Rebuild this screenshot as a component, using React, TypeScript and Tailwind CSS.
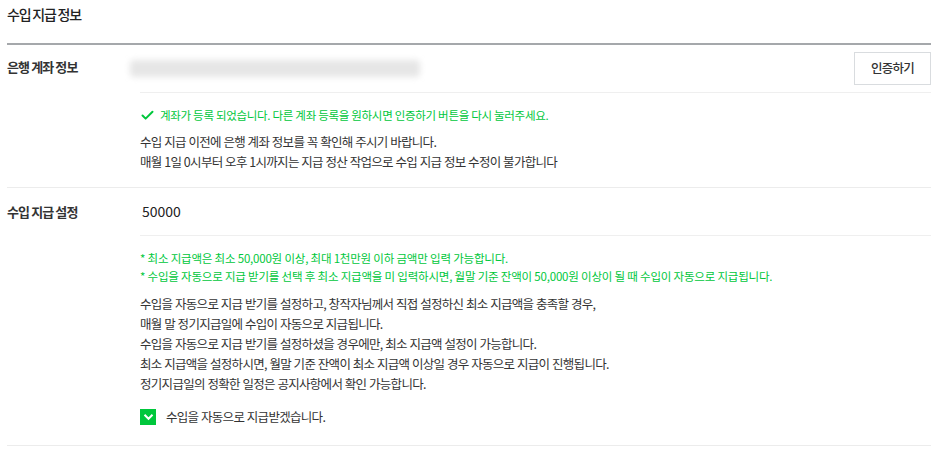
import { Check } from "lucide-react";

const font = { fontFamily: '"Noto Sans CJK KR", "Noto Sans", sans-serif' };

const notes = [
    "* 최소 지급액은 최소 50,000원 이상, 최대 1천만원 이하 금액만 입력 가능합니다.",
    "* 수입을 자동으로 지급 받기를 선택 후 최소 지급액을 미 입력하시면, 월말 기준 잔액이 50,000원 이상이 될 때 수입이 자동으로 지급됩니다.",
];

const guide = [
    "수입을 자동으로 지급 받기를 설정하고, 창작자님께서 직접 설정하신 최소 지급액을 충족할 경우,",
    "매월 말 정기지급일에 수입이 자동으로 지급됩니다.",
    "수입을 자동으로 지급 받기를 설정하셨을 경우에만, 최소 지급액 설정이 가능합니다.",
    "최소 지급액을 설정하시면, 월말 기준 잔액이 최소 지급액 이상일 경우 자동으로 지급이 진행됩니다.",
    "정기지급일의 정확한 일정은 공지사항에서 확인 가능합니다.",
];

export default function App() {
    return (
        <div style={font} className="w-[947px] h-[452px] bg-white pl-[7px] pr-[16px] text-[#333]">
            <h2 className="pt-[4px] h-[43px] text-[14px] leading-[20px] font-medium tracking-[-1.2px] text-[#222]">수입 지급 정보</h2>
            <div className="h-[2px] bg-[#a5a8ab]"></div>

            {/* bank account */}
            <div className="flex border-b border-[#ececec]">
                <div className="w-[133px] shrink-0 pt-[13px] text-[13px] leading-[18px] font-semibold tracking-[-0.9px] text-[#333]">은행 계좌 정보</div>
                <div className="flex-1">
                    <div className="flex items-center justify-between pt-[7px] pb-[7px] border-b border-[#efefef]">
                        <div className="w-[290px] h-[17px] -ml-[10px] bg-[#e6e6e6] blur-[3px] rounded-sm"></div>
                        <button className="w-[77px] h-[33px] border border-[#d9dcdf] bg-white text-[12.5px] font-medium tracking-[-0.8px] text-[#333]">인증하기</button>
                    </div>
                    <div className="pt-[14px] flex items-center gap-[5px] text-[11.5px] leading-[16px] tracking-[-0.3px] text-[#00c73c]">
                        <Check className="w-[15px] h-[15px] text-[#00c73c]" strokeWidth={3.2} />
                        <span>계좌가 등록 되었습니다. 다른 계좌 등록을 원하시면 인증하기 버튼을 다시 눌러주세요.</span>
                    </div>
                    <div className="pt-[9px] pb-[15px] text-[12.5px] leading-[20px] tracking-[-0.7px] [word-spacing:0.5px] text-[#333]">
                        <p>수입 지급 이전에 은행 계좌 정보를 꼭 확인해 주시기 바랍니다.</p>
                        <p>매월 1일 0시부터 오후 1시까지는 지급 정산 작업으로 수입 지급 정보 수정이 불가합니다</p>
                    </div>
                </div>
            </div>

            {/* payout setting */}
            <div className="flex border-b border-[#ececec]">
                <div className="w-[133px] shrink-0 pt-[15px] text-[13px] leading-[18px] font-semibold tracking-[-0.9px] text-[#333]">수입 지급 설정</div>
                <div className="flex-1">
                    <div className="h-[48px] flex items-center pl-[2px] border-b border-[#efefef] text-[14px] text-[#222]">50000</div>
                    <div className="pt-[13px] text-[11.5px] leading-[18px] tracking-[-0.2px] text-[#00c73c]">
                        {notes.map((n) => <p key={n}>{n}</p>)}
                    </div>
                    <div className="pt-[9px] text-[12.5px] leading-[20px] tracking-[-0.7px] [word-spacing:0.5px] text-[#333]">
                        {guide.map((g) => <p key={g}>{g}</p>)}
                    </div>
                    <label className="mt-[14px] pb-[18px] flex items-center gap-[10px] text-[12.5px] tracking-[-0.7px] [word-spacing:0.5px] text-[#333]">
                        <span className="w-[16px] h-[16px] bg-[#00c73c] flex items-center justify-center">
                            <svg width="11" height="8" viewBox="0 0 11 8" fill="none">
                                <path d="M1.5 1.8 L5.5 5.8 L9.5 1.8" stroke="white" strokeWidth="2" />
                            </svg>
                        </span>
                        수입을 자동으로 지급받겠습니다.
                    </label>
                </div>
            </div>
        </div>
    );
}
